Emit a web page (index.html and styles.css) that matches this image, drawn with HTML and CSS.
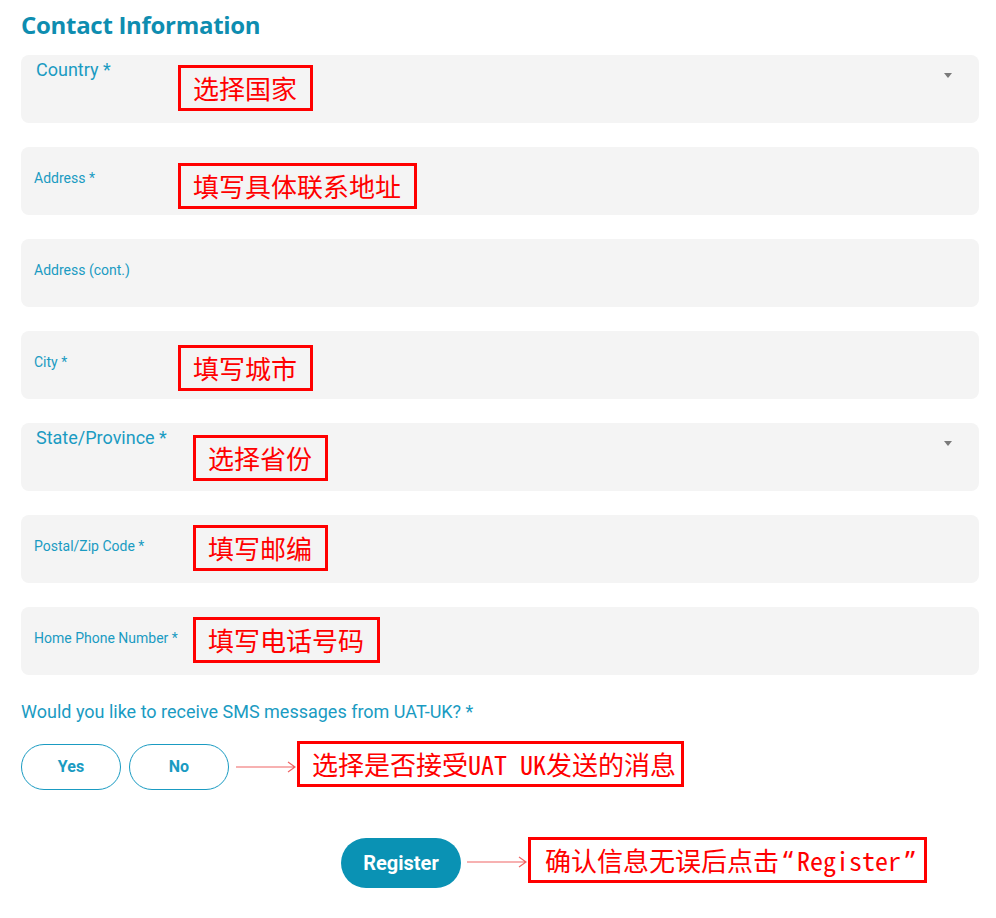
FILE: index.html
```html
<!DOCTYPE html>
<html lang="en">
<head>
<meta charset="utf-8">
<title>Contact Information</title>
<link rel="stylesheet" href="styles.css">
</head>
<body>
<main class="page">
  <h2 class="heading">Contact Information</h2>

  <div class="fields">
    <div class="field field-select">
      <span class="label-lg">Country *</span>
      <span class="caret"></span>
      <span class="note note-country">选择国家</span>
    </div>
    <div class="field">
      <span class="label-sm">Address *</span>
      <span class="note note-address">填写具体联系地址</span>
    </div>
    <div class="field">
      <span class="label-sm">Address (cont.)</span>
    </div>
    <div class="field">
      <span class="label-sm">City *</span>
      <span class="note note-city">填写城市</span>
    </div>
    <div class="field field-select">
      <span class="label-lg">State/Province *</span>
      <span class="caret"></span>
      <span class="note note-state">选择省份</span>
    </div>
    <div class="field">
      <span class="label-sm">Postal/Zip Code *</span>
      <span class="note note-postal">填写邮编</span>
    </div>
    <div class="field">
      <span class="label-sm">Home Phone Number *</span>
      <span class="note note-phone">填写电话号码</span>
    </div>
  </div>

  <p class="question">Would you like to receive SMS messages from UAT-UK? *</p>

  <div class="choice-row">
    <button class="pill">Yes</button>
    <button class="pill">No</button>
    <svg class="arrow" width="60" height="14" viewBox="0 0 60 14"><path d="M0 7H59M52 2L59 7L52 12" fill="none" stroke="#f06464" stroke-width="1.2"/></svg>
    <span class="note note-sms">选择是否接受UAT UK发送的消息</span>
  </div>

  <div class="submit-row">
    <button class="register">Register</button>
    <svg class="arrow" width="60" height="14" viewBox="0 0 60 14"><path d="M0 7H59M52 2L59 7L52 12" fill="none" stroke="#f06464" stroke-width="1.2"/></svg>
    <span class="note note-submit">确认信息无误后点击<span class="q">“</span>Register<span class="q">”</span></span>
  </div>
</main>
</body>
</html>
```

FILE: styles.css
```css
* { box-sizing: border-box; }

html, body {
  margin: 0;
  padding: 0;
  background: #ffffff;
}

.page {
  width: 958px;
  margin-left: 21px;
  font-family: Roboto, "Liberation Sans", sans-serif;
  color: #1a9bc2;
}

.heading {
  margin: 0;
  padding-top: 8px;
  height: 55px;
  font-family: "Open Sans", "Noto Sans", sans-serif;
  font-weight: 700;
  font-size: 24px;
  line-height: 34px;
  color: #0e8db0;
  letter-spacing: -0.3px;
}

.fields {
  display: flex;
  flex-direction: column;
  gap: 24px;
}

.field {
  position: relative;
  height: 68px;
  background: #f4f4f4;
  border-radius: 8px;
  padding: 23px 13px 0;
}

.field-select {
  padding: 5px 15px 0;
}

.label-sm {
  display: block;
  font-size: 14px;
  line-height: 16px;
  color: #1a9bc2;
}

.label-lg {
  display: block;
  font-size: 18px;
  line-height: 20px;
  color: #1a9bc2;
}

.caret {
  position: absolute;
  right: 27px;
  top: 18px;
  width: 0;
  height: 0;
  border-left: 4px solid transparent;
  border-right: 4px solid transparent;
  border-top: 5px solid #7a7a7a;
}

.note {
  display: inline-block;
  border: 3px solid #ff0000;
  padding: 0 13px 0 12px;
  height: 46px;
  line-height: 40px;
  font-family: "Noto Sans Mono CJK SC", "Noto Sans CJK SC", monospace;
  font-size: 26px;
  color: #ff0000;
  white-space: pre;
}

.field .note {
  position: absolute;
}

.note-country { left: 157px; top: 10px; }
.note-address { left: 157px; top: 16px; }
.note-city { left: 157px; top: 14px; }
.note-state { left: 172px; top: 12px; }
.note-postal { left: 172px; top: 10px; }
.note-phone { left: 172px; top: 10px; }

.question {
  margin: 26px 0 0;
  font-size: 18px;
  line-height: 22px;
  color: #1a9bc2;
}

.choice-row {
  display: flex;
  align-items: flex-start;
  margin-top: 18px;
}

.pill {
  width: 100px;
  height: 46px;
  margin-top: 3px;
  margin-right: 8px;
  border: 1px solid #1a9bc2;
  border-radius: 23px;
  background: #ffffff;
  color: #1a9bc2;
  font-family: Roboto, "Liberation Sans", sans-serif;
  font-weight: 700;
  font-size: 16px;
  padding: 0 0 2px;
}

.arrow {
  flex: none;
}

.choice-row .arrow {
  margin-top: 19px;
  margin-left: -1px;
  margin-right: 1px;
}

.note-sms {
  padding: 0 5px 0 12px;
}

.submit-row {
  display: flex;
  align-items: flex-start;
  margin-top: 47px;
  padding-left: 320px;
}

.register {
  width: 120px;
  height: 50px;
  margin-top: 1px;
  margin-right: 6px;
  border: none;
  border-radius: 25px;
  background: #0a92b4;
  color: #ffffff;
  font-family: Roboto, "Liberation Sans", sans-serif;
  font-weight: 700;
  font-size: 20px;
  padding: 0;
}

.submit-row .arrow {
  margin-top: 18px;
  margin-right: 1px;
}

.note-submit {
  padding: 0 5px 0 14px;
}

.q {
  display: inline-block;
  width: 18px;
  text-align: center;
  font-family: "Noto Sans", "Liberation Sans", sans-serif;
  font-size: 28px;
}
```
